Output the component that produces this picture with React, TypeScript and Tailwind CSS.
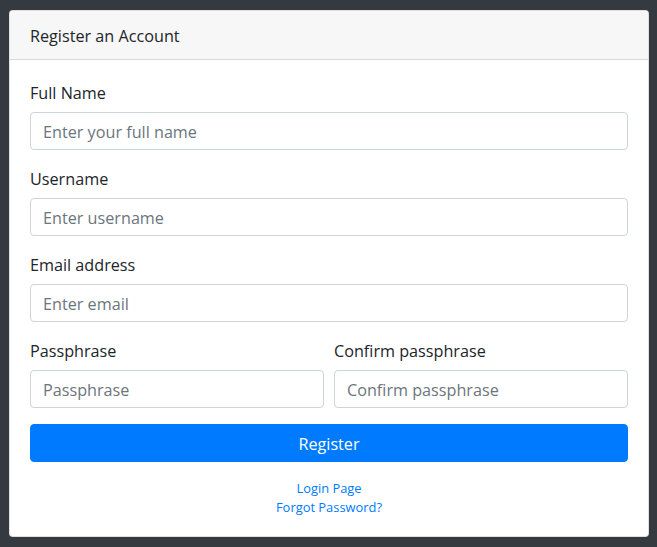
import React from "react";

const font = { fontFamily: '"Open Sans", "Liberation Sans", sans-serif' };

function Field({ label, placeholder, type = "text" }: { label: string; placeholder: string; type?: string }) {
  return (
    <div className="flex flex-col">
      <label className="mb-[7px] pt-px text-[16.2px] leading-6 text-[#212529]">{label}</label>
      <input
        type={type}
        placeholder={placeholder}
        className="h-[38px] w-full rounded-[4px] border border-[#ced4da] bg-white px-3 pt-[2px] text-[16.2px] text-[#495057] placeholder:text-[#6c757d] outline-none"
      />
    </div>
  );
}

export default function App() {
  return (
    <div className="min-h-[547px] bg-[#343a40] pl-[9px] pt-[10px] pb-[9px]" style={font}>
      <div className="w-[640px] overflow-hidden rounded-[4px] border border-[rgba(0,0,0,0.125)] bg-white">
        <div className="border-b border-[rgba(0,0,0,0.125)] bg-[#f7f7f7] px-5 pt-[13px] pb-[11px] text-[16.2px] leading-6 text-[#212529]">
          Register an Account
        </div>
        <div className="flex flex-col gap-4 px-5 pt-5 pb-[19px]">
          <Field label="Full Name" placeholder="Enter your full name" />
          <Field label="Username" placeholder="Enter username" />
          <Field label="Email address" placeholder="Enter email" type="email" />
          <div className="grid grid-cols-2 gap-[10px]">
            <Field label="Passphrase" placeholder="Passphrase" type="password" />
            <Field label="Confirm passphrase" placeholder="Confirm passphrase" type="password" />
          </div>
          <button className="h-[38px] w-full rounded-[4px] border border-[#007bff] bg-[#007bff] pt-[2px] text-[16.2px] text-white">
            Register
          </button>
          <div className="flex flex-col items-center pt-px text-[12.9px] leading-[19.2px] text-[#007bff]">
            <a href="#" className="text-[#007bff]">Login Page</a>
            <a href="#" className="text-[#007bff]">Forgot Password?</a>
          </div>
        </div>
      </div>
    </div>
  );
}
